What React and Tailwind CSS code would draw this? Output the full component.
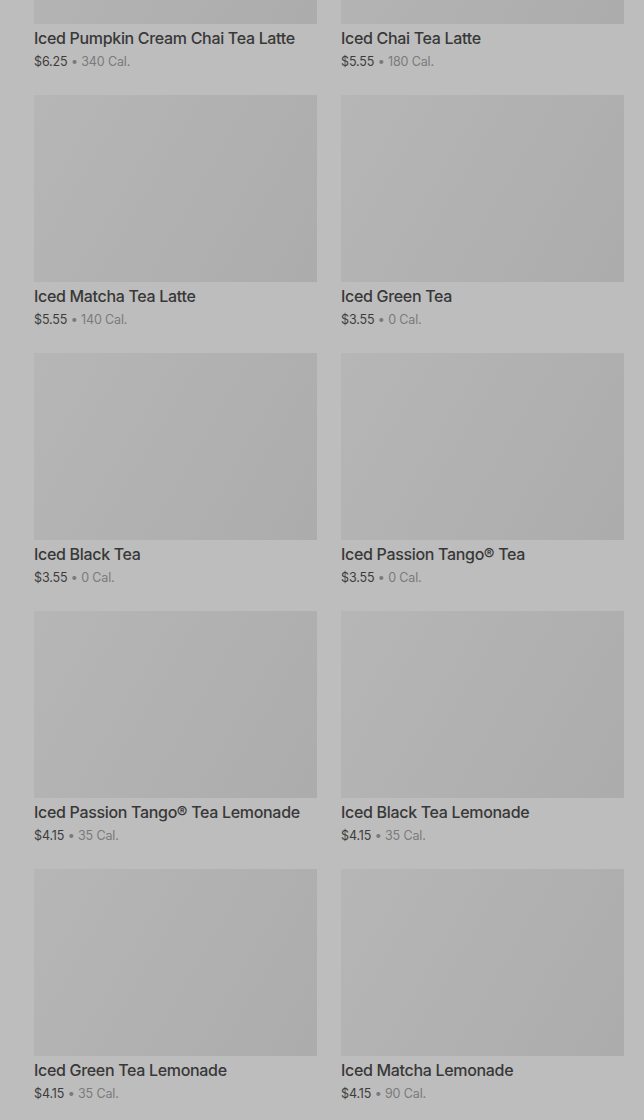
import React from "react";

const items = [
  ["Iced Pumpkin Cream Chai Tea Latte", "$6.25", "340 Cal."],
  ["Iced Chai Tea Latte", "$5.55", "180 Cal."],
  ["Iced Matcha Tea Latte", "$5.55", "140 Cal."],
  ["Iced Green Tea", "$3.55", "0 Cal."],
  ["Iced Black Tea", "$3.55", "0 Cal."],
  ["Iced Passion Tango® Tea", "$3.55", "0 Cal."],
  ["Iced Passion Tango® Tea Lemonade", "$4.15", "35 Cal."],
  ["Iced Black Tea Lemonade", "$4.15", "35 Cal."],
  ["Iced Green Tea Lemonade", "$4.15", "35 Cal."],
  ["Iced Matcha Lemonade", "$4.15", "90 Cal."],
];

function Card({ name, price, cal }) {
  return (
    <div className="flex flex-col h-[258px]">
      <div className="h-[187px] bg-[linear-gradient(120deg,#b6b6b6_0%,#b1b1b1_50%,#acacac_100%)]" />
      <div className="pt-[4px]">
        <div className="text-[16px] leading-[20px] text-[#383838] font-medium tracking-[-0.02em] whitespace-nowrap">
          {name}
        </div>
        <div className="mt-[5px] text-[12.5px] leading-[18px] tracking-[-0.01em] whitespace-nowrap">
          <span className="text-[#3c3c3c]">{price}</span>
          <span className="text-[#7a7a7a]"> • {cal}</span>
        </div>
      </div>
    </div>
  );
}

export default function App() {
  return (
    <div
      className="h-[1120px] overflow-hidden bg-[#bdbdbd]"
      style={{ fontFamily: "Inter, 'Noto Sans', sans-serif" }}
    >
      <div className="grid grid-cols-2 gap-x-6 pl-[34px] pr-[20px] mt-[-163px]">
        {items.map((it, i) => (
          <Card key={i} name={it[0]} price={it[1]} cal={it[2]} />
        ))}
      </div>
    </div>
  );
}
